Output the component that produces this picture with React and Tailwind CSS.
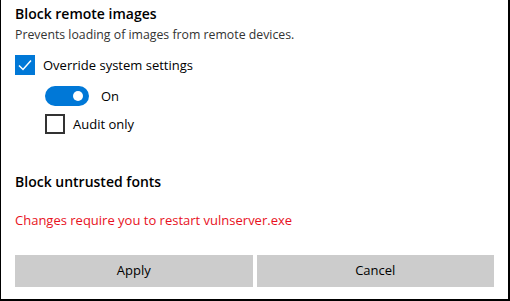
export default function App() {
  return (
    <div className="w-[510px] h-[301px] bg-white border-l border-r-2 border-b-2 border-black font-['Open_Sans',sans-serif] text-[#000] flex flex-col">
      <div className="pl-[14px] pt-[3px]">
        <h2 className="text-[14px] font-semibold leading-[22px]">Block remote images</h2>
        <p className="text-[12.3px] leading-[16px] text-[#333] mt-[2px]">Prevents loading of images from remote devices.</p>
        <label className="flex items-center gap-2 mt-[12px] h-5">
          <span className="w-5 h-5 bg-[#0078d7] flex items-center justify-center">
            <svg width="14" height="12" viewBox="0 0 14 12">
              <path d="M1 6.5 L5 10.5 L13 1.5" stroke="white" strokeWidth="1.5" fill="none" />
            </svg>
          </span>
          <span className="text-[13px] leading-5">Override system settings</span>
        </label>
        <div className="pl-[30px] mt-[11px] flex flex-col gap-2">
          <div className="flex items-center gap-3 h-5">
            <span className="w-11 h-5 rounded-full bg-[#0078d7] flex items-center justify-end pr-[6px]">
              <span className="w-[10px] h-[10px] rounded-full bg-white" />
            </span>
            <span className="text-[13px] leading-5">On</span>
          </div>
          <label className="flex items-center gap-2 h-5">
            <span className="w-5 h-5 border-2 border-[#333]" />
            <span className="text-[13px] leading-5">Audit only</span>
          </label>
        </div>
        <h2 className="text-[14px] font-semibold leading-[22px] mt-[37px]">Block untrusted fonts</h2>
        <p className="text-[13px] leading-5 text-[#e81123] mt-[17px]">Changes require you to restart vulnserver.exe</p>
      </div>
      <div className="mt-auto mb-[12px] px-[14px] flex gap-1">
        <button className="flex-1 h-8 bg-[#cccccc] text-[13px]">Apply</button>
        <button className="flex-1 h-8 bg-[#cccccc] text-[13px]">Cancel</button>
      </div>
    </div>
  );
}
